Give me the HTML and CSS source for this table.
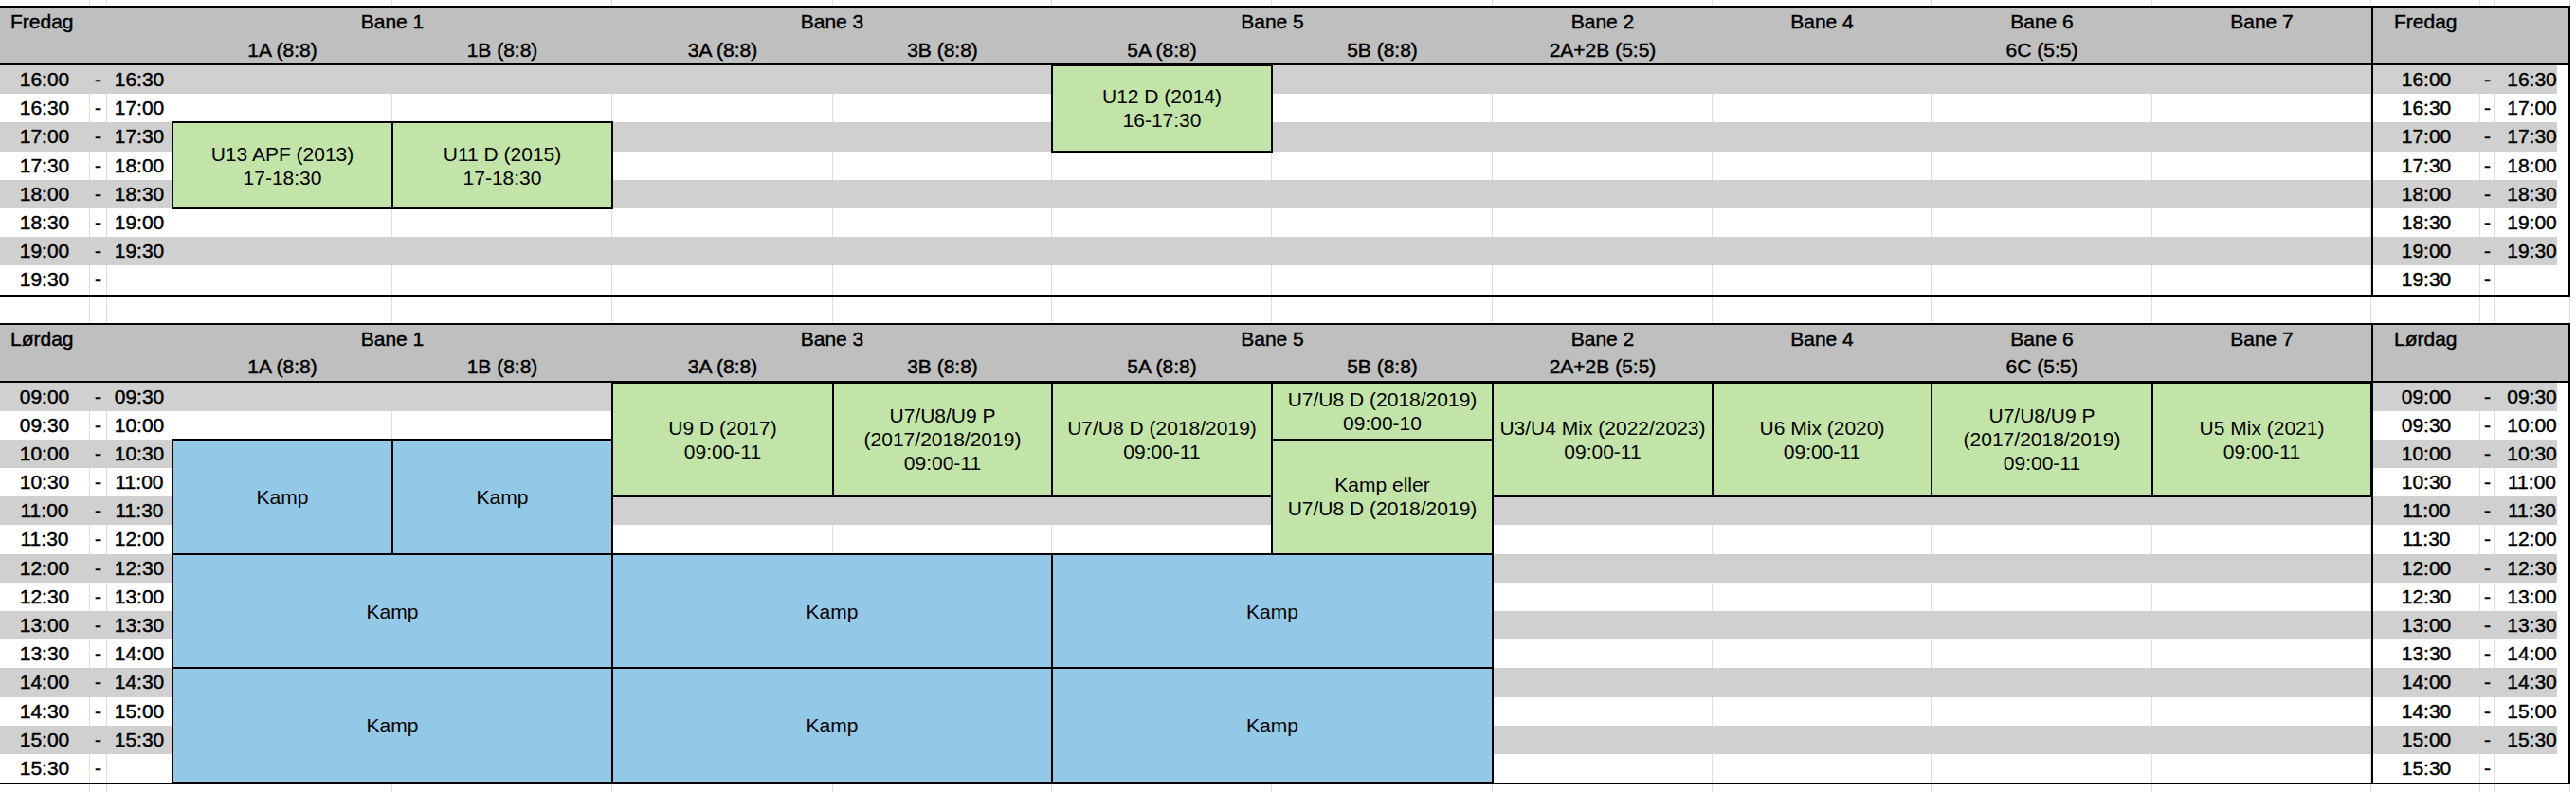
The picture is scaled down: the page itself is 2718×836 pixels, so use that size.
FILE: index.html
```html
<!DOCTYPE html>
<html lang="no">
<head>
<meta charset="utf-8">
<title>Baneoversikt</title>
<link rel="stylesheet" href="styles.css">
</head>
<body>
<div class="gap top"><div></div><div></div><div></div><div></div><div></div><div></div><div></div><div></div><div></div><div></div><div></div><div></div><div></div><div></div><div></div><div></div></div>

<section class="day">
  <div class="head">
    <div class="label span3">Fredag</div>
    <div class="span2">Bane 1</div>
    <div class="span2">Bane 3</div>
    <div class="span2">Bane 5</div>
    <div>Bane 2</div>
    <div>Bane 4</div>
    <div>Bane 6</div>
    <div>Bane 7</div>
    <div class="rlabel">Fredag</div>
    <div class="span3"></div>
    <div>1A (8:8)</div>
    <div>1B (8:8)</div>
    <div>3A (8:8)</div>
    <div>3B (8:8)</div>
    <div>5A (8:8)</div>
    <div>5B (8:8)</div>
    <div>2A+2B (5:5)</div>
    <div></div>
    <div>6C (5:5)</div>
    <div></div>
  </div>
  <div class="body">
    <div class="rows">
      <div class="row alt"><div>16:00</div><div>-</div><div>16:30</div><div></div><div></div><div></div><div></div><div></div><div></div><div></div><div></div><div></div><div></div><div class="rs">16:00</div><div>-</div><div class="re">16:30</div></div>
      <div class="row"><div>16:30</div><div>-</div><div>17:00</div><div></div><div></div><div></div><div></div><div></div><div></div><div></div><div></div><div></div><div></div><div class="rs">16:30</div><div>-</div><div class="re">17:00</div></div>
      <div class="row alt"><div>17:00</div><div>-</div><div>17:30</div><div></div><div></div><div></div><div></div><div></div><div></div><div></div><div></div><div></div><div></div><div class="rs">17:00</div><div>-</div><div class="re">17:30</div></div>
      <div class="row"><div>17:30</div><div>-</div><div>18:00</div><div></div><div></div><div></div><div></div><div></div><div></div><div></div><div></div><div></div><div></div><div class="rs">17:30</div><div>-</div><div class="re">18:00</div></div>
      <div class="row alt"><div>18:00</div><div>-</div><div>18:30</div><div></div><div></div><div></div><div></div><div></div><div></div><div></div><div></div><div></div><div></div><div class="rs">18:00</div><div>-</div><div class="re">18:30</div></div>
      <div class="row"><div>18:30</div><div>-</div><div>19:00</div><div></div><div></div><div></div><div></div><div></div><div></div><div></div><div></div><div></div><div></div><div class="rs">18:30</div><div>-</div><div class="re">19:00</div></div>
      <div class="row alt"><div>19:00</div><div>-</div><div>19:30</div><div></div><div></div><div></div><div></div><div></div><div></div><div></div><div></div><div></div><div></div><div class="rs">19:00</div><div>-</div><div class="re">19:30</div></div>
      <div class="row"><div>19:30</div><div>-</div><div></div><div></div><div></div><div></div><div></div><div></div><div></div><div></div><div></div><div></div><div></div><div class="rs">19:30</div><div>-</div><div class="re"></div></div>
    </div>
    <div class="events">
      <div class="ev green cD r3 h3">U13 APF (2013)<br>17-18:30</div>
      <div class="ev green cE r3 h3">U11 D (2015)<br>17-18:30</div>
      <div class="ev green cH r1 h3">U12 D (2014)<br>16-17:30</div>
    </div>
  </div>
</section>

<div class="gap"><div></div><div></div><div></div><div></div><div></div><div></div><div></div><div></div><div></div><div></div><div></div><div></div><div></div><div></div><div></div><div></div></div>

<section class="day">
  <div class="head">
    <div class="label span3">Lørdag</div>
    <div class="span2">Bane 1</div>
    <div class="span2">Bane 3</div>
    <div class="span2">Bane 5</div>
    <div>Bane 2</div>
    <div>Bane 4</div>
    <div>Bane 6</div>
    <div>Bane 7</div>
    <div class="rlabel">Lørdag</div>
    <div class="span3"></div>
    <div>1A (8:8)</div>
    <div>1B (8:8)</div>
    <div>3A (8:8)</div>
    <div>3B (8:8)</div>
    <div>5A (8:8)</div>
    <div>5B (8:8)</div>
    <div>2A+2B (5:5)</div>
    <div></div>
    <div>6C (5:5)</div>
    <div></div>
  </div>
  <div class="body">
    <div class="rows">
      <div class="row alt"><div>09:00</div><div>-</div><div>09:30</div><div></div><div></div><div></div><div></div><div></div><div></div><div></div><div></div><div></div><div></div><div class="rs">09:00</div><div>-</div><div class="re">09:30</div></div>
      <div class="row"><div>09:30</div><div>-</div><div>10:00</div><div></div><div></div><div></div><div></div><div></div><div></div><div></div><div></div><div></div><div></div><div class="rs">09:30</div><div>-</div><div class="re">10:00</div></div>
      <div class="row alt"><div>10:00</div><div>-</div><div>10:30</div><div></div><div></div><div></div><div></div><div></div><div></div><div></div><div></div><div></div><div></div><div class="rs">10:00</div><div>-</div><div class="re">10:30</div></div>
      <div class="row"><div>10:30</div><div>-</div><div>11:00</div><div></div><div></div><div></div><div></div><div></div><div></div><div></div><div></div><div></div><div></div><div class="rs">10:30</div><div>-</div><div class="re">11:00</div></div>
      <div class="row alt"><div>11:00</div><div>-</div><div>11:30</div><div></div><div></div><div></div><div></div><div></div><div></div><div></div><div></div><div></div><div></div><div class="rs">11:00</div><div>-</div><div class="re">11:30</div></div>
      <div class="row"><div>11:30</div><div>-</div><div>12:00</div><div></div><div></div><div></div><div></div><div></div><div></div><div></div><div></div><div></div><div></div><div class="rs">11:30</div><div>-</div><div class="re">12:00</div></div>
      <div class="row alt"><div>12:00</div><div>-</div><div>12:30</div><div></div><div></div><div></div><div></div><div></div><div></div><div></div><div></div><div></div><div></div><div class="rs">12:00</div><div>-</div><div class="re">12:30</div></div>
      <div class="row"><div>12:30</div><div>-</div><div>13:00</div><div></div><div></div><div></div><div></div><div></div><div></div><div></div><div></div><div></div><div></div><div class="rs">12:30</div><div>-</div><div class="re">13:00</div></div>
      <div class="row alt"><div>13:00</div><div>-</div><div>13:30</div><div></div><div></div><div></div><div></div><div></div><div></div><div></div><div></div><div></div><div></div><div class="rs">13:00</div><div>-</div><div class="re">13:30</div></div>
      <div class="row"><div>13:30</div><div>-</div><div>14:00</div><div></div><div></div><div></div><div></div><div></div><div></div><div></div><div></div><div></div><div></div><div class="rs">13:30</div><div>-</div><div class="re">14:00</div></div>
      <div class="row alt"><div>14:00</div><div>-</div><div>14:30</div><div></div><div></div><div></div><div></div><div></div><div></div><div></div><div></div><div></div><div></div><div class="rs">14:00</div><div>-</div><div class="re">14:30</div></div>
      <div class="row"><div>14:30</div><div>-</div><div>15:00</div><div></div><div></div><div></div><div></div><div></div><div></div><div></div><div></div><div></div><div></div><div class="rs">14:30</div><div>-</div><div class="re">15:00</div></div>
      <div class="row alt"><div>15:00</div><div>-</div><div>15:30</div><div></div><div></div><div></div><div></div><div></div><div></div><div></div><div></div><div></div><div></div><div class="rs">15:00</div><div>-</div><div class="re">15:30</div></div>
      <div class="row"><div>15:30</div><div>-</div><div></div><div></div><div></div><div></div><div></div><div></div><div></div><div></div><div></div><div></div><div></div><div class="rs">15:30</div><div>-</div><div class="re"></div></div>
    </div>
    <div class="events">
      <div class="ev blue cD r3 h4">Kamp</div>
      <div class="ev blue cE r3 h4">Kamp</div>
      <div class="ev blue cDE r7 h4">Kamp</div>
      <div class="ev blue cDE r11 h4">Kamp</div>
      <div class="ev green cF r1 h4">U9 D (2017)<br>09:00-11</div>
      <div class="ev green cG r1 h4">U7/U8/U9 P<br>(2017/2018/2019)<br>09:00-11</div>
      <div class="ev green cH r1 h4">U7/U8 D (2018/2019)<br>09:00-11</div>
      <div class="ev green cI r1 h2">U7/U8 D (2018/2019)<br>09:00-10</div>
      <div class="ev green cI r3 h4">Kamp eller<br>U7/U8 D (2018/2019)</div>
      <div class="ev green cJ r1 h4">U3/U4 Mix (2022/2023)<br>09:00-11</div>
      <div class="ev green cK r1 h4">U6 Mix (2020)<br>09:00-11</div>
      <div class="ev green cL r1 h4">U7/U8/U9 P<br>(2017/2018/2019)<br>09:00-11</div>
      <div class="ev green cM r1 h4">U5 Mix (2021)<br>09:00-11</div>
      <div class="ev blue cFG r7 h4">Kamp</div>
      <div class="ev blue cFG r11 h4">Kamp</div>
      <div class="ev blue cHI r7 h4">Kamp</div>
      <div class="ev blue cHI r11 h4">Kamp</div>
    </div>
  </div>
</section>

<div class="gap bottom"><div></div><div></div><div></div><div></div><div></div><div></div><div></div><div></div><div></div><div></div><div></div><div></div><div></div><div></div><div></div><div></div></div>
</body>
</html>
```

FILE: styles.css
```css
:root {
  --cols: 95px 18px 69px 232px 232px 233px 231px 232px 233px 232px 231px 233px 231px 115px 16px 79px;
  --rh: 30.2px;
  --head: #bfbfbf;
  --alt: #d0d0d0;
  --grid: #dedede;
}

* { box-sizing: border-box; }

html, body {
  margin: 0;
  padding: 0;
  background: #fff;
}

body {
  width: 2718px;
  height: 836px;
  overflow: hidden;
  font-family: "Liberation Sans", Arial, sans-serif;
  color: #000;
}

.gap {
  display: grid;
  grid-template-columns: var(--cols);
  height: 28px;
}
.gap.top { height: 6px; }
.gap.bottom { height: 10px; }
.gap > div { border-right: 1px solid var(--grid); }

.day {
  width: 2712px;
  border-top: 2px solid #000;
  border-bottom: 2px solid #000;
}

.head {
  display: grid;
  grid-template-columns: var(--cols);
  grid-template-rows: 29.5px 29.5px;
  background: var(--head);
  border-bottom: 2px solid #000;
  font-size: 21px;
  -webkit-text-stroke: 0.45px #000;
}
.head > div {
  line-height: 29.5px;
  text-align: center;
  white-space: nowrap;
}
.head .span2 { grid-column: span 2; }
.head .span3 { grid-column: span 3; }
.head .label {
  text-align: left;
  padding-left: 11px;
}
.head .rlabel {
  grid-column: span 3;
  grid-row: span 2;
  border-left: 2px solid #000;
  border-right: 2px solid #000;
  text-align: left;
  padding-left: 22px;
}

.body { display: grid; }

.rows, .events {
  grid-area: 1 / 1;
  display: grid;
  grid-template-columns: var(--cols);
  grid-auto-rows: var(--rh);
}

.row { display: contents; }
.row > div {
  background: #fff;
  border-right: 1px solid var(--grid);
  font-size: 21px;
  -webkit-text-stroke: 0.45px #000;
  line-height: var(--rh);
  text-align: center;
  white-space: nowrap;
}
.row.alt > div {
  background: var(--alt);
  border-right-color: var(--alt);
}
.row > .rs { border-left: 2px solid #000; }
.row > .re,
.row.alt > .re { border-right: 2px solid #000; }
.row.alt > .re {
  background: linear-gradient(to right, var(--alt) 65px, #fff 65px);
}

.ev {
  margin: -1px;
  border: 2px solid #000;
  display: flex;
  align-items: center;
  justify-content: center;
  text-align: center;
  font-size: 21px;
  line-height: 25px;
  white-space: nowrap;
}
.green { background: #c2e4a9; }
.blue { background: #94c8e7; }

.cD { grid-column: 4 / span 1; }
.cE { grid-column: 5 / span 1; }
.cF { grid-column: 6 / span 1; }
.cG { grid-column: 7 / span 1; }
.cH { grid-column: 8 / span 1; }
.cI { grid-column: 9 / span 1; }
.cJ { grid-column: 10 / span 1; }
.cK { grid-column: 11 / span 1; }
.cL { grid-column: 12 / span 1; }
.cM { grid-column: 13 / span 1; }
.cDE { grid-column: 4 / span 2; }
.cFG { grid-column: 6 / span 2; }
.cHI { grid-column: 8 / span 2; }

.r1 { grid-row-start: 1; }
.r3 { grid-row-start: 3; }
.r7 { grid-row-start: 7; }
.r11 { grid-row-start: 11; }
.h2 { grid-row-end: span 2; }
.h3 { grid-row-end: span 3; }
.h4 { grid-row-end: span 4; }
```
